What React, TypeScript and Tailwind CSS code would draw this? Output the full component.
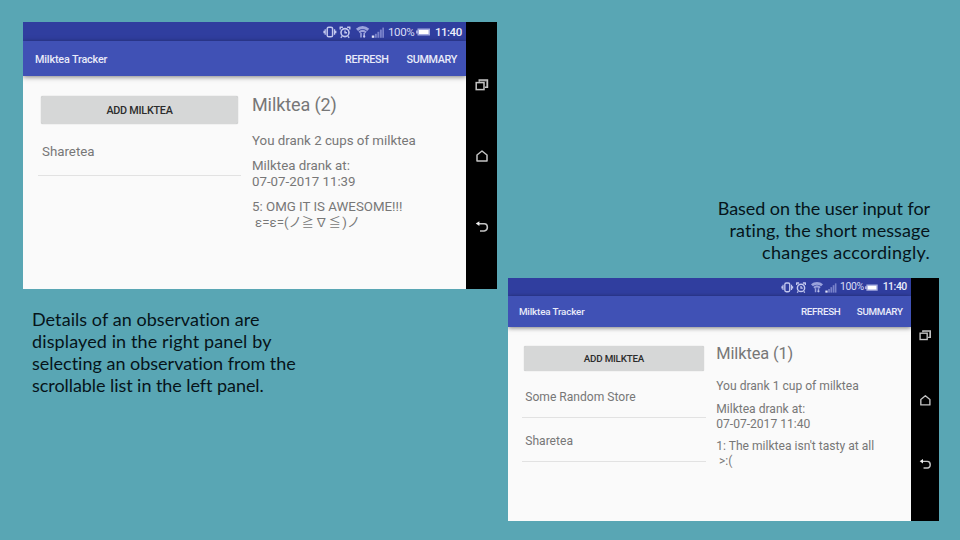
import React from "react";

type Entry = { name: string };

type PhoneProps = {
  stores: Entry[];
  title: string;
  summary: string;
  time: string;
  rating: string;
  face: React.ReactNode;
};

function StatusIcons() {
  return (
    <svg width="64" height="14" viewBox="0 0 64 14" fill="none" stroke="#c3c8ee" className="shrink-0">
      {/* vibrate */}
      <rect x="4.200" y="2.200" width="5.400" height="9.600" rx="1.6" strokeWidth="1.500" />
      <path d="M2.200 4.200v5.600M11.600 4.200v5.600M1 5.800v2.400M12.800 5.800v2.400" strokeWidth="1.200" />
      {/* alarm */}
      <circle cx="22" cy="7.6" r="4" strokeWidth="1.6" />
      <path d="M22 5.4v2.4h2M16.700 2.200h3.200M24.100 2.200h3.200M17.200 1.8v2.600M26.800 1.8v2.600M19 11.400l-1.200 1.400M25 11.400l1.200 1.400" strokeWidth="1.400" />
      {/* wifi with transfer arrows */}
      <g stroke="#9aa2dc">
        <path d="M34 4.800c3.200-3 8-3 11.200 0" strokeWidth="3" />
        <path d="M36.200 7.400c2-1.700 4.800-1.700 6.800 0" strokeWidth="2.200" />
        <path d="M38 8v4.500M41.200 8v4.500" strokeWidth="1.600" />
      </g>
      <circle cx="41.200" cy="11.400" r="1.100" fill="#c3c8ee" stroke="none" />
      {/* signal */}
      <g stroke="none" fill="#7a83cb">
        <rect x="48.800" y="10.500" width="2.500" height="2.300" fill="#e3e5f8" />
        <rect x="51.900" y="8.800" width="1.900" height="4" />
        <rect x="54.400" y="6.800" width="1.900" height="6" />
        <rect x="56.900" y="4.600" width="1.900" height="8.200" />
        <rect x="59.300" y="2.600" width="1.700" height="10.200" />
      </g>
    </svg>
  );
}

function Battery() {
  return (
    <svg width="14" height="8" viewBox="0 0 14 8" className="shrink-0">
      <path d="M0 2.500h1.500V.5h12.500v7h-12.500V5.500H0z" fill="#a4abdf" />
      <rect x="3" y="2" width="9.500" height="4" fill="#fff" />
    </svg>
  );
}

function NavBar() {
  return (
    <div className="flex w-[31px] shrink-0 flex-col items-center bg-black pt-[56px]">
      <svg width="14" height="14" viewBox="0 0 14 14" fill="none" stroke="#c4c4c4" strokeWidth="1.5">
        <rect x="1.200" y="4.600" width="7.800" height="7" />
        <path d="M4.200 3.700V2h8.300v7.300H10" strokeWidth="1.400" />
        <path d="M4.200 2.800h7.500v6.500" strokeWidth="1.200" opacity="0.6" />
      </svg>
      <svg width="14" height="14" viewBox="0 0 14 14" fill="none" stroke="#c4c4c4" strokeWidth="1.5" strokeLinejoin="round" className="mt-[57px]">
        <path d="M2 6L7 2l5 4v6H2z" />
      </svg>
      <svg width="14" height="14" viewBox="0 0 14 14" fill="none" stroke="#c4c4c4" strokeWidth="1.600" className="mt-[57px]">
        <path d="M3 3.700h6.200c4.200 0 4.200 7.300 0 7.300H5" />
        <path d="M0.800 3.500l3.600-2.300v4.800z" fill="#eee" stroke="none" />
      </svg>
    </div>
  );
}

function Phone({ stores, title, summary, time, rating, face }: PhoneProps) {
  return (
    <div className="flex h-[267px] w-[474px] overflow-hidden bg-[#fafafa] font-[Roboto,sans-serif]">
      <div className="flex min-w-0 flex-1 flex-col">
        <div className="flex h-[19px] shrink-0 items-center justify-end bg-[#303e9f] pr-[3px] pt-[1px] text-[11.5px] text-[#d9dcf5]">
          <StatusIcons />
          <span className="ml-[1px] w-[28px] whitespace-nowrap tracking-[-0.4px]">100%</span>
          <Battery />
          <span className="ml-[5px] w-[28px] whitespace-nowrap font-medium tracking-[-0.5px] text-[#eceefb]">11:40</span>
        </div>
        <div className="z-10 flex h-[35px] shrink-0 items-center bg-[#4051b5] pl-[12px] pr-[9px] pt-[2px] text-[10.800px] font-medium tracking-[-0.16px] text-[#e9ebf9] shadow-[0_1px_5px_rgba(0,0,0,0.5)]">
          <span className="flex-1">Milktea Tracker</span>
          <span className="tracking-[-0.35px]">REFRESH</span>
          <span className="ml-[18px] tracking-[-0.35px]">SUMMARY</span>
        </div>
        <div className="flex flex-1 text-[13.3px] text-[#777]">
          <div className="w-[218px] shrink-0 pl-[15px] pt-[20px]">
            <div className="mx-[3px] flex h-[28px] items-center justify-center rounded-[2px] bg-[#d6d7d7] pt-[1px] text-[10.800px] font-medium tracking-[-0.25px] text-[#2c2c2c] shadow-[0_0_1px_rgba(0,0,0,0.35)]">
              ADD MILKTEA
            </div>
            <div className="mt-[3px]">
              {stores.map((s) => (
                <div key={s.name} className="flex h-[48.500px] items-center border-b border-[#e2e2e2] pl-[4px] pt-[3px]">
                  {s.name}
                </div>
              ))}
            </div>
          </div>
          <div className="pl-[11px] pt-[17px] leading-[16px]">
            <div className="text-[18px] leading-[24px] tracking-[-0.1px]">{title}</div>
            <div className="mt-[16px]">{summary}</div>
            <div className="mt-[9px]">Milktea drank at:</div>
            <div>{time}</div>
            <div className="mt-[9px]">{rating}</div>
            <div className="whitespace-nowrap pl-[3px]">{face}</div>
          </div>
        </div>
      </div>
      <NavBar />
    </div>
  );
}

export default function App() {
  return (
    <div className="flex h-[540px] w-[960px] overflow-hidden bg-[#59a6b4] font-[Lato,sans-serif] text-[18px] leading-[22px] text-[#06141a] [font-variant-ligatures:none]">
      <div className="w-[508px] pl-[23px] pt-[22px]">
        <Phone
          stores={[{ name: "Sharetea" }]}
          title="Milktea (2)"
          summary="You drank 2 cups of milktea"
          time="07-07-2017 11:39"
          rating="5: OMG IT IS AWESOME!!!"
          face={
            <span className="font-[Roboto,'Noto_Sans_CJK_JP',sans-serif]">
              ε=ε=(ノ<span className="text-[12px] tracking-[1.500px]">≧∇≦</span>)ノ
            </span>
          }
        />
        <div className="ml-[9px] mt-[19px] whitespace-nowrap">
          <div className="tracking-[0.06px]">Details of an observation are</div>
          <div className="tracking-[0.12px]">displayed in the right panel by</div>
          <div>selecting an observation from the</div>
          <div className="tracking-[-0.06px]">scrollable list in the left panel.</div>
        </div>
      </div>
      <div className="w-[431px] pt-[197px]">
        <div className="mb-[15.400px] whitespace-nowrap pr-[9px] text-right">
          <div className="tracking-[-0.08px]">Based on the user input for</div>
          <div className="tracking-[0.1px]">rating, the short message</div>
          <div className="tracking-[0.3px]">changes accordingly.</div>
        </div>
        <div className="[zoom:0.9093]">
          <Phone
            stores={[{ name: "Some Random Store" }, { name: "Sharetea" }]}
            title="Milktea (1)"
            summary="You drank 1 cup of milktea"
            time="07-07-2017 11:40"
            rating="1: The milktea isn't tasty at all"
            face=">:("
          />
        </div>
      </div>
    </div>
  );
}
